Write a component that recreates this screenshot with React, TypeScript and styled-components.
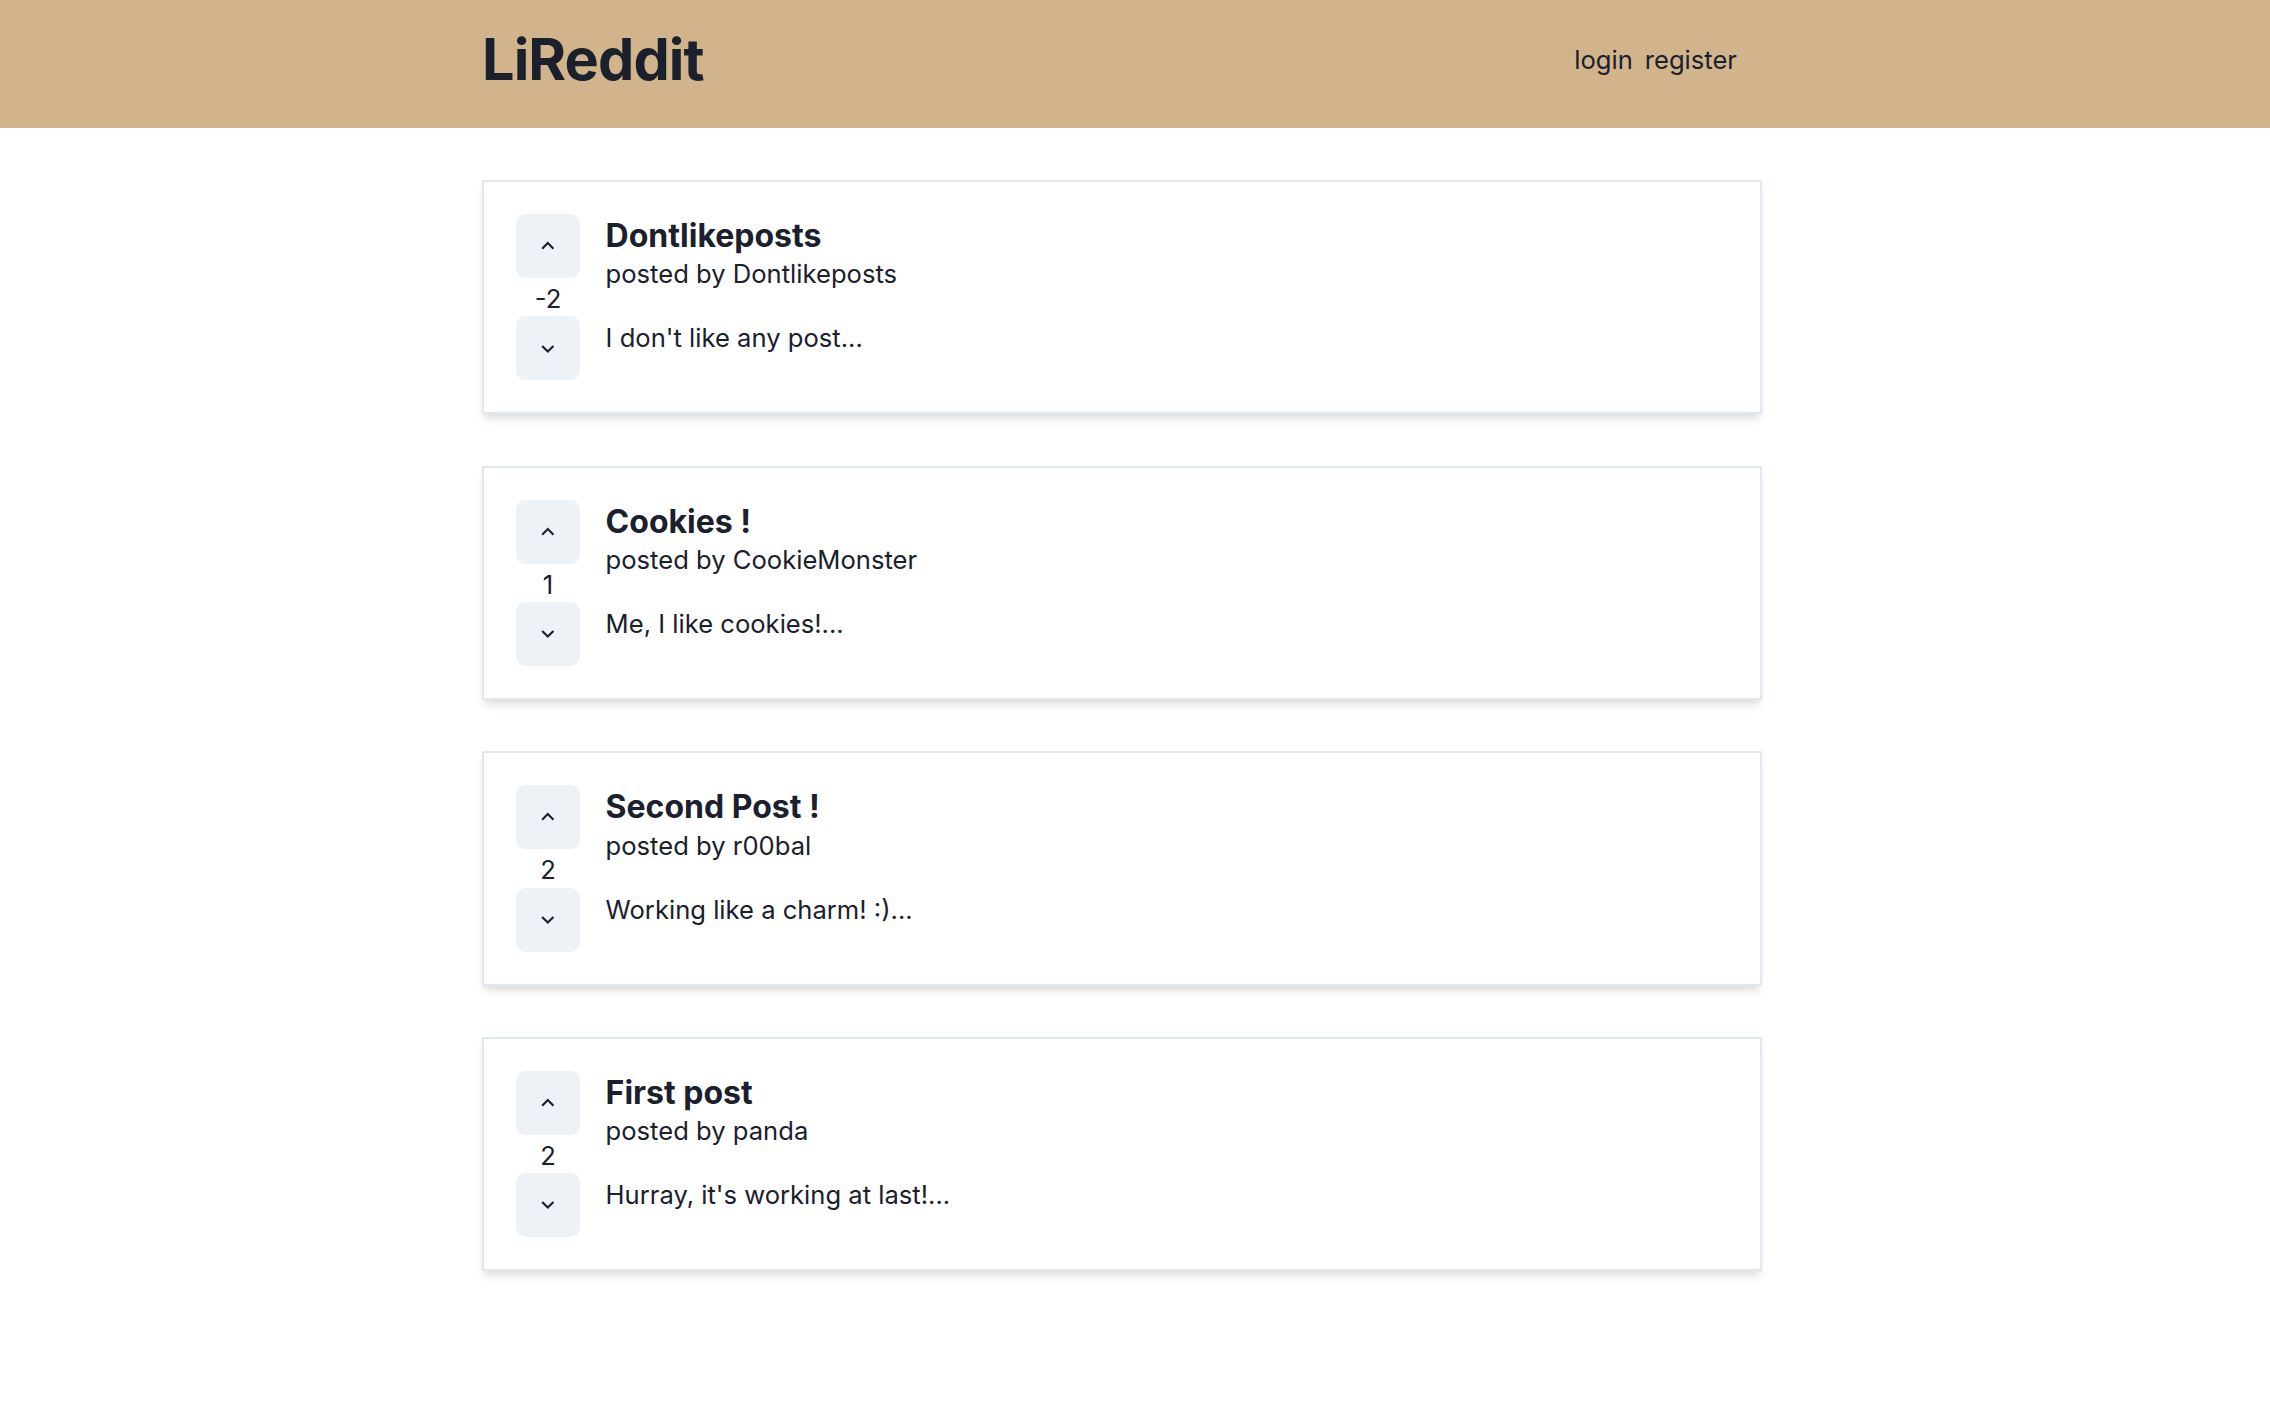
import React from "react";
import styled, { createGlobalStyle } from "styled-components";

const GlobalStyle = createGlobalStyle`
  html, body { margin: 0; padding: 0; background: #ffffff; }
  body {
    font-family: Inter, "Noto Sans", "Liberation Sans", sans-serif;
    color: #1A202C;
    font-size: 25.6px;
    line-height: 1.5;
  }
  * { box-sizing: border-box; }
`;

const NavBar = styled.header`
  background: #d2b48c;
  padding: 21.6px 51.6px 29.6px 25.6px;
  display: flex;
`;

const NavInner = styled.div`
  display: flex;
  align-items: center;
  width: 100%;
  max-width: 1280px;
  height: 76.8px;
  margin: 0 auto;
`;

const Logo = styled.h1`
  margin: 0;
  font-size: 57.6px;
  line-height: 1.2;
  font-weight: 700;
  letter-spacing: -0.9px;
  color: #1A202C;
`;

const NavLinks = styled.nav`
  margin-left: auto;
  display: flex;
  gap: 12px;
  padding-right: 25px;
`;

const NavLink = styled.a`
  font-size: 25.6px;
  color: #1A202C;
  text-decoration: none;
  cursor: pointer;
`;

const Main = styled.main`
  padding-right: 26px;
`;

const Stack = styled.div`
  max-width: 1280px;
  margin: 52px auto;
  display: flex;
  flex-direction: column;
  gap: 51.2px;
`;

const Card = styled.article`
  display: flex;
  padding: 32px;
  border: 2px solid #E2E8F0;
  box-shadow: 0 6.4px 9.6px -1.6px rgba(0, 0, 0, 0.1), 0 3.2px 6.4px -1.6px rgba(0, 0, 0, 0.06);
  background: #fff;
`;

const Votes = styled.div`
  display: flex;
  flex-direction: column;
  align-items: center;
  width: 64px;
`;

const VoteButton = styled.button`
  width: 64px;
  height: 64px;
  border: none;
  border-radius: 9.6px;
  background: #EDF2F7;
  color: #1A202C;
  display: flex;
  align-items: center;
  justify-content: center;
  padding: 0;
  cursor: pointer;
`;

const Score = styled.span`
  font-size: 25.6px;
  line-height: 38.4px;
  padding-top: 2px;
  margin-bottom: -2px;
`;

const Body = styled.div`
  margin-left: 25.6px;
  padding-top: 3px;
  display: flex;
  flex-direction: column;
`;

const Title = styled.h2`
  margin: 0;
  font-size: 32px;
  line-height: 38.4px;
  font-weight: 700;
  color: #1A202C;
`;

const Meta = styled.p`
  margin: 0;
  font-size: 25.6px;
  line-height: 38.4px;
`;

const Snippet = styled.p`
  margin: 25.6px 0 0;
  font-size: 25.6px;
  line-height: 38.4px;
`;

const Chevron = ({ up }: { up?: boolean }) => (
  <svg width="25.6" height="25.6" viewBox="0 0 24 24" fill="currentColor" aria-hidden="true">
    {up ? (
      <path d="M12 8l-6 6 1.41 1.41L12 10.83l4.59 4.58L18 14z" />
    ) : (
      <path d="M16.59 8.59L12 13.17 7.41 8.59 6 10l6 6 6-6z" />
    )}
  </svg>
);

const posts = [
  { title: "Dontlikeposts", author: "Dontlikeposts", points: -2, text: "I don't like any post..." },
  { title: "Cookies !", author: "CookieMonster", points: 1, text: "Me, I like cookies!..." },
  { title: "Second Post !", author: "r00bal", points: 2, text: "Working like a charm! :)..." },
  { title: "First post", author: "panda", points: 2, text: "Hurray, it's working at last!..." },
];

export default function App() {
  return (
    <>
      <GlobalStyle />
      <NavBar>
        <NavInner>
          <Logo>LiReddit</Logo>
          <NavLinks>
            <NavLink>login</NavLink>
            <NavLink>register</NavLink>
          </NavLinks>
        </NavInner>
      </NavBar>
      <Main>
        <Stack>
          {posts.map((p) => (
            <Card key={p.title}>
              <Votes>
                <VoteButton aria-label="updoot post">
                  <Chevron up />
                </VoteButton>
                <Score>{p.points}</Score>
                <VoteButton aria-label="downdoot post">
                  <Chevron />
                </VoteButton>
              </Votes>
              <Body>
                <Title>{p.title}</Title>
                <Meta>posted by {p.author}</Meta>
                <Snippet>{p.text}</Snippet>
              </Body>
            </Card>
          ))}
        </Stack>
      </Main>
    </>
  );
}
